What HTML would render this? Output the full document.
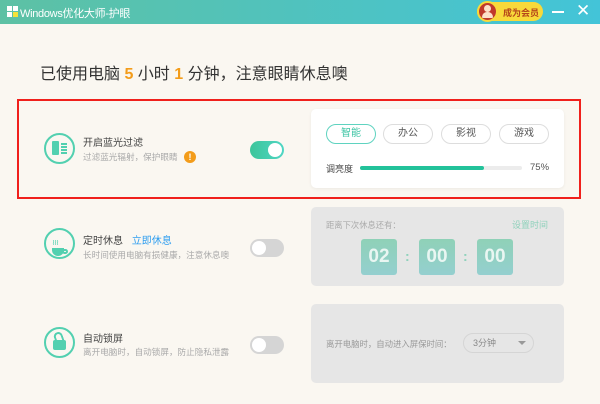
<!DOCTYPE html>
<html><head><meta charset="utf-8"><style>
*{margin:0;padding:0;box-sizing:border-box}
body{width:600px;height:404px;overflow:hidden;background:#faf7f1;font-family:"Liberation Sans","Noto Sans CJK SC",sans-serif;position:relative}
.a{position:absolute;white-space:nowrap}
.tb{left:0;top:0;width:600px;height:24px;background:linear-gradient(90deg,#5dc1a4,#43c4d8)}
.ic{width:31px;height:31px;border:2px solid #52d0b0;border-radius:50%}
.t1{font-size:10px;color:#444}
.t2{font-size:8.6px;color:#aaa}
.tg{width:34px;height:18px;border-radius:9px;background:#d5d5d5}
.tg::after{content:"";position:absolute;left:2px;top:2px;width:14px;height:14px;border-radius:50%;background:#fff}
.tg.on{background:linear-gradient(90deg,#3cc59a,#4fd6c4)}
.tg.on::after{left:18px}
.card{left:311px;width:253px;height:79px;border-radius:5px;background:#e6e6e6}
.btn{top:124px;width:50px;height:20px;border:1px solid #ddd;border-radius:10px;font-size:10px;color:#555;text-align:center;line-height:18px;background:#fff}
.tm{top:239px;width:36px;height:36px;border-radius:3px;background:linear-gradient(#8fd1b7,#94cfcf);font-size:19px;font-weight:bold;text-align:center;line-height:36px;color:#e9f6f2}
.col{top:248px;color:#8fd1bb;font-size:14px;font-weight:bold}
</style></head><body>
<div class="a tb"></div>
<div class="a" style="left:7px;top:6px;width:5px;height:5px;background:#fff"></div>
<div class="a" style="left:13px;top:6px;width:5px;height:5px;background:#fff"></div>
<div class="a" style="left:7px;top:12px;width:5px;height:5px;background:#fff"></div>
<div class="a" style="left:13px;top:12px;width:5px;height:5px;background:#f5e33a"></div>
<div class="a" style="left:20px;top:5px;font-size:11px;color:#fff;letter-spacing:-0.3px">Windows优化大师-护眼</div>
<div class="a" style="left:477px;top:2px;width:66px;height:19px;border-radius:10px;background:#f8d93a"></div>
<div class="a" style="left:477px;top:1px;width:21px;height:21px;border-radius:50%;background:#c0392b;border:2px solid #f8d93a"></div>
<div class="a" style="left:484px;top:5px;width:7px;height:7px;border-radius:50%;background:#fde0c8"></div>
<div class="a" style="left:482px;top:12px;width:11px;height:6px;border-radius:5px 5px 1px 1px;background:#fde0c8"></div>
<div class="a" style="left:503px;top:6px;font-size:9px;font-weight:bold;color:#b5471a">成为会员</div>
<div class="a" style="left:552px;top:11px;width:12px;height:2px;background:#fff"></div>
<div class="a" style="left:576px;top:1px;font-size:17px;color:#fff">✕</div>

<div class="a" style="left:40px;top:60px;font-size:16px;color:#333">已使用电脑 <b style="color:#f39c1a">5</b> 小时 <b style="color:#f39c1a">1</b> 分钟，注意眼睛休息噢</div>

<div class="a" style="left:17px;top:99px;width:564px;height:100px;border:2px solid #f0201c"></div>

<div class="a ic" style="left:44px;top:133px"></div>
<div class="a" style="left:52px;top:141px;width:7px;height:14px;background:#52d0b0;border-radius:1px"></div>
<div class="a" style="left:61px;top:143px;width:6px;height:2px;background:#52d0b0;box-shadow:0 3px #52d0b0,0 6px #52d0b0,0 9px #52d0b0"></div>
<div class="a t1" style="left:83px;top:134px">开启蓝光过滤</div>
<div class="a t2" style="left:83px;top:151px">过滤蓝光辐射，保护眼睛</div>
<div class="a" style="left:184px;top:151px;width:12px;height:12px;border-radius:50%;background:#f39c1a;color:#fff;font-size:9px;font-weight:bold;text-align:center;line-height:12px">!</div>
<div class="a tg on" style="left:250px;top:141px"></div>

<div class="a" style="left:311px;top:109px;width:253px;height:79px;border-radius:5px;background:#fff;box-shadow:0 1px 3px rgba(0,0,0,.06)"></div>
<div class="a btn" style="left:326px;border-color:#5fd3c0;color:#3fc5a5">智能</div>
<div class="a btn" style="left:383px">办公</div>
<div class="a btn" style="left:441px">影视</div>
<div class="a btn" style="left:499px">游戏</div>
<div class="a" style="left:326px;top:162px;font-size:9px;color:#444">调亮度</div>
<div class="a" style="left:360px;top:166px;width:162px;height:4px;border-radius:2px;background:#ececec"></div>
<div class="a" style="left:360px;top:166px;width:124px;height:4px;border-radius:2px;background:#22c29a"></div>
<div class="a" style="left:530px;top:162px;font-size:9.5px;color:#555">75%</div>

<div class="a ic" style="left:44px;top:228px"></div>
<div class="a" style="left:52px;top:238px;font-size:8px;color:#52d0b0;letter-spacing:-1px">≀≀≀</div>
<div class="a" style="left:52px;top:248px;width:12px;height:8px;border-radius:0 0 6px 6px;background:#52d0b0"></div>
<div class="a" style="left:62px;top:249px;width:6px;height:5px;border-radius:3px;border:2px solid #52d0b0"></div>
<div class="a t1" style="left:83px;top:232px">定时休息 <span style="color:#2f9ef0;margin-left:6px">立即休息</span></div>
<div class="a t2" style="left:83px;top:249px">长时间使用电脑有损健康，注意休息噢</div>
<div class="a tg" style="left:250px;top:239px"></div>
<div class="a card" style="top:207px"></div>
<div class="a t2" style="left:326px;top:219px;font-size:8.3px">距离下次休息还有：</div>
<div class="a" style="left:512px;top:218px;font-size:9px;color:#8fd1bb">设置时间</div>
<div class="a tm" style="left:361px">02</div>
<div class="a col" style="left:405px">:</div>
<div class="a tm" style="left:419px">00</div>
<div class="a col" style="left:463px">:</div>
<div class="a tm" style="left:477px">00</div>

<div class="a ic" style="left:44px;top:327px"></div>
<div class="a" style="left:53px;top:340px;width:13px;height:10px;border-radius:2px;background:#52d0b0"></div>
<div class="a" style="left:54px;top:332px;width:9px;height:10px;border:2px solid #52d0b0;border-bottom:none;border-radius:5px 5px 0 0;transform:rotate(-20deg)"></div>
<div class="a t1" style="left:83px;top:330px">自动锁屏</div>
<div class="a t2" style="left:83px;top:346px">离开电脑时，自动锁屏，防止隐私泄露</div>
<div class="a tg" style="left:250px;top:336px"></div>
<div class="a card" style="top:304px"></div>
<div class="a t2" style="left:326px;top:338px;color:#999;font-size:8.4px">离开电脑时，自动进入屏保时间：</div>
<div class="a" style="left:463px;top:333px;width:71px;height:20px;border:1px solid #d5d5d5;border-radius:10px;font-size:9px;color:#888;padding-left:9px;line-height:18px">3分钟</div>
<div class="a" style="left:518px;top:341px;border:4px solid transparent;border-top:4px solid #999"></div>
</body></html>
